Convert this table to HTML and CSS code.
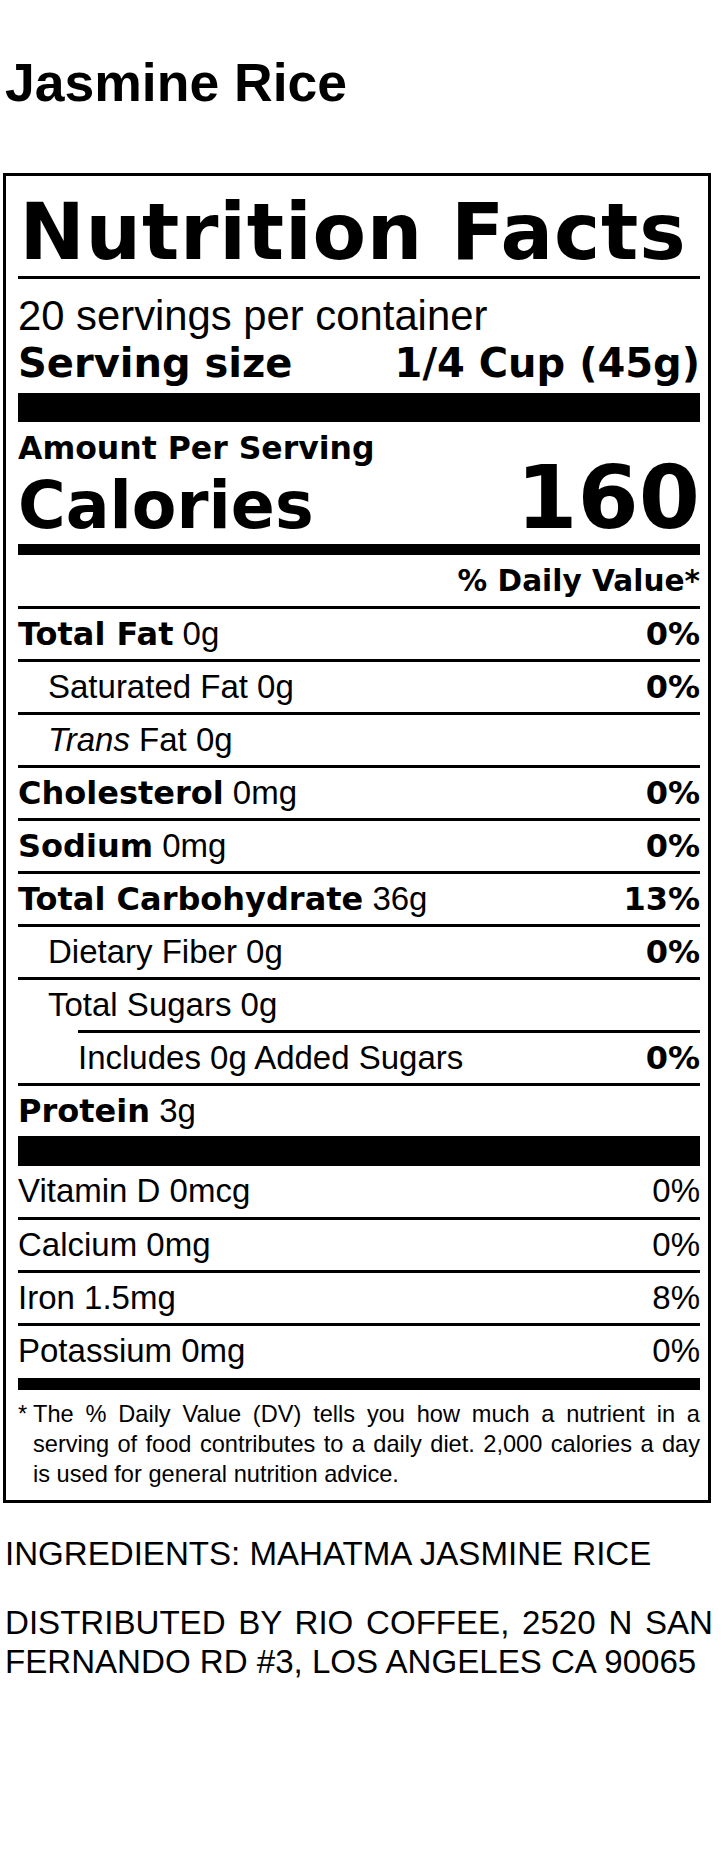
FILE: index.html
```html
<!DOCTYPE html>
<html lang="en">
<head>
<meta charset="utf-8">
<title>Jasmine Rice</title>
<link rel="stylesheet" href="styles.css">
</head>
<body>
<div class="page">
  <h1 class="title">Jasmine Rice</h1>

  <section class="label">
    <h2 class="nf-title">Nutrition Facts</h2>
    <div class="rule"></div>
    <p class="servings">20 servings per container</p>
    <div class="serving-size">
      <span>Serving size</span>
      <span>1/4 Cup (45g)</span>
    </div>
    <div class="bar bar-thick"></div>
    <p class="amount">Amount Per Serving</p>
    <div class="calories">
      <span class="cal-label">Calories</span>
      <span class="cal-value">160</span>
    </div>
    <div class="bar bar-mid"></div>
    <p class="dv-head">% Daily Value*</p>

    <div class="nutrients">
      <div class="row"><span><b>Total Fat</b> 0g</span><b>0%</b></div>
      <div class="row sub"><span>Saturated Fat 0g</span><b>0%</b></div>
      <div class="row sub"><span><i>Trans</i> Fat 0g</span></div>
      <div class="row"><span><b>Cholesterol</b> 0mg</span><b>0%</b></div>
      <div class="row"><span><b>Sodium</b> 0mg</span><b>0%</b></div>
      <div class="row"><span><b>Total Carbohydrate</b> 36g</span><b>13%</b></div>
      <div class="row sub"><span>Dietary Fiber 0g</span><b>0%</b></div>
      <div class="row sub"><span>Total Sugars 0g</span></div>
      <div class="row subsub"><span>Includes 0g Added Sugars</span><b>0%</b></div>
      <div class="row"><span><b>Protein</b> 3g</span></div>
    </div>

    <div class="bar bar-thick2"></div>

    <div class="vitamins">
      <div class="row first"><span>Vitamin D 0mcg</span><span>0%</span></div>
      <div class="row"><span>Calcium 0mg</span><span>0%</span></div>
      <div class="row"><span>Iron 1.5mg</span><span>8%</span></div>
      <div class="row"><span>Potassium 0mg</span><span>0%</span></div>
    </div>

    <div class="bar bar-bottom"></div>

    <div class="footnote">
      <span class="star">*</span>
      <p>The % Daily Value (DV) tells you how much a nutrient in a serving of food contributes to a daily diet. 2,000 calories a day is used for general nutrition advice.</p>
    </div>
  </section>

  <p class="info ingredients">INGREDIENTS: MAHATMA JASMINE RICE</p>
  <p class="info distributor">DISTRIBUTED BY RIO COFFEE, 2520 N SAN FERNANDO RD #3, LOS ANGELES CA 90065</p>
</div>
</body>
</html>
```

FILE: styles.css
```css
html, body {
  margin: 0;
  padding: 0;
  background: #fff;
  color: #000;
}

body {
  font-family: "Liberation Sans", Arial, sans-serif;
}

.page {
  padding-left: 3px;
  width: 708px;
}

.title {
  margin: 56px 0 0 2px;
  font-family: "Liberation Sans", Arial, sans-serif;
  font-weight: bold;
  font-size: 53.5px;
  line-height: 1;
}

.label {
  margin-top: 63px;
  width: 708px;
  box-sizing: border-box;
  border: 3px solid #000;
  padding: 17px 8px 11.5px 12px;
}

.label p,
.label h2 {
  margin: 0;
}

.nf-title,
.serving-size,
.amount,
.calories,
.dv-head,
.row b {
  font-family: "DejaVu Sans", Verdana, sans-serif;
  font-weight: bold;
}

.nf-title {
  font-size: 78px;
  line-height: 1;
  margin-left: 1.5px !important;
  letter-spacing: 0.8px;
}

.rule {
  margin-top: 5px;
  height: 3px;
  background: #000;
}

.servings {
  margin-top: 16px !important;
  font-size: 41.8px;
  line-height: 1;
}

.serving-size {
  margin-top: 7px;
  display: flex;
  justify-content: space-between;
  align-items: baseline;
  font-size: 40px;
  line-height: 1;
}

.bar {
  background: #000;
}

.bar-thick {
  margin-top: 10px;
  height: 29px;
}

.amount {
  margin-top: 11px !important;
  font-size: 31.5px;
  line-height: 1;
}

.calories {
  margin-top: -2px;
  display: flex;
  justify-content: space-between;
  align-items: baseline;
  line-height: 0.8;
}

.cal-label {
  font-size: 65px;
}

.cal-value {
  font-size: 88px;
}

.bar-mid {
  margin-top: 10.6px;
  height: 11px;
}

.dv-head {
  margin-top: 12px !important;
  text-align: right;
  font-size: 29.6px;
  line-height: 1;
}

.nutrients {
  margin-top: 10px;
}

.row {
  display: flex;
  justify-content: space-between;
  align-items: baseline;
  box-sizing: border-box;
  height: 53px;
  border-top: 3px solid #000;
  font-size: 33px;
  line-height: 50px;
  white-space: nowrap;
}

.row b {
  font-size: 32px;
}

.row i {
  font-style: italic;
}

.row.sub {
  padding-left: 30px;
}

.row.subsub {
  margin-left: 60px;
}

.bar-thick2 {
  height: 30px;
}

.vitamins .row.first {
  border-top: none;
  height: 51px;
}

.bar-bottom {
  margin-top: 2px;
  height: 12px;
}

.footnote {
  display: flex;
  margin-top: 8.5px;
  font-size: 23.6px;
  line-height: 30px;
}

.footnote .star {
  width: 15px;
  flex: none;
}

.footnote p {
  flex: 1;
  text-align: justify;
}

.info {
  margin: 0;
  padding-left: 2px;
  font-size: 33.1px;
  line-height: 39px;
}

.ingredients {
  margin-top: 30.5px;
}

.distributor {
  margin-top: 30px;
  text-align: justify;
  width: 708px;
}
```
